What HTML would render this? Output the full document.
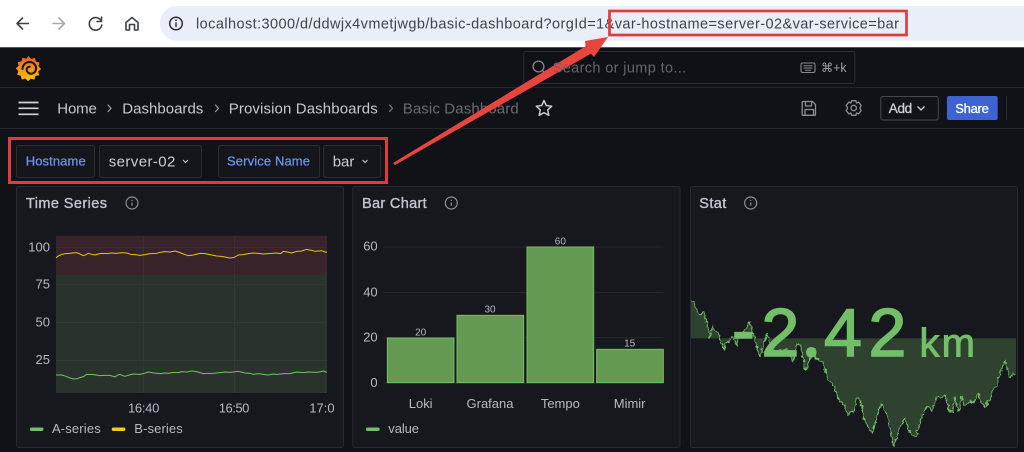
<!DOCTYPE html>
<html><head><meta charset="utf-8"><title>Basic Dashboard</title>
<style>
html,body{margin:0;padding:0;width:1024px;height:452px;overflow:hidden;background:#111217}
svg{display:block;filter:blur(.3px)}
text{font-family:"Liberation Sans",sans-serif}
</style></head><body>
<svg width="1024" height="452" viewBox="0 0 1024 452" xmlns="http://www.w3.org/2000/svg">
<defs>
<linearGradient id="lg" x1="0" y1="1" x2="0" y2="0"><stop offset="0" stop-color="#fbc70a"/><stop offset="1" stop-color="#ec5a2a"/></linearGradient>
<clipPath id="c1"><rect x="17" y="187" width="317.500" height="260"/></clipPath>
<filter id="rough" color-interpolation-filters="sRGB" filterUnits="userSpaceOnUse" x="0" y="300" width="1100" height="520"><feTurbulence type="fractalNoise" baseFrequency=".09" numOctaves="2" seed="4"/><feDisplacementMap in="SourceGraphic" scale="14" xChannelSelector="R" yChannelSelector="G"/></filter>
</defs>
<!-- browser -->
<rect width="1024" height="47.500" fill="#fff"/>
<path d="M1024 6H176a17.400 17.400 0 0 0 0 34.700H1024z" fill="#e9eef8"/>
<g fill="none" stroke-linecap="round" stroke-linejoin="round">
<path d="M28.500 23.500H17M22.500 18l-5.500 5.500 5.500 5.500" stroke="#3f4246" stroke-width="1.600"/>
<path d="M53 23.500H64.500M59 18l5.500 5.500-5.500 5.500" stroke="#a9abae" stroke-width="1.600"/>
<path d="M100.700 20.200A6.300 6.300 0 1 0 101.800 25" stroke="#3f4246" stroke-width="1.600"/>
<path d="M101.500 17v4.500H97" stroke="#3f4246" stroke-width="1.600"/>
<path d="M126 22.500l6-5 6 5v7.500h-3.500v-5.500h-5v5.500H126z" stroke="#3f4246" stroke-width="1.600"/>
<circle cx="176" cy="23.500" r="6.300" stroke="#2c2e31" stroke-width="1.500"/>
<path d="M176 23v3.500" stroke="#2c2e31" stroke-width="1.500"/>
</g>
<circle cx="176" cy="20.300" r=".9" fill="#2c2e31"/>
<text x="196" y="28.500" font-size="14.500" fill="#404347" textLength="703" lengthAdjust="spacing">localhost:3000/d/ddwjx4vmetjwgb/basic-dashboard?orgId=1&amp;var-hostname=server-02&amp;var-service=bar</text>
<rect y="47" width="1024" height="1" fill="#55565a"/>
<!-- header -->
<rect y="48" width="1024" height="404" fill="#111217"/>
<rect y="87" width="1024" height="1" fill="#25262b"/>
<rect y="128" width="1024" height="1" fill="#25262b"/>
<!-- grafana logo -->
<path d="M28.500 56l2.800 3 3.700-1.200.8 3.700 3.700 1-1 3.700 2.600 2.800-2.900 2.500 1 3.700-3.800.8-1 3.600-3.600-1-2.700 2.500-2.700-2.600-3.700 1-.8-3.700-3.700-1.100 1.100-3.600-2.500-2.700 2.800-2.700-.8-3.600 3.700-.8 1-3.700 3.700 1.100z" fill="url(#lg)"/>
<path d="M22.500 69a7 7 0 0 1 7-7c3.600 0 6.600 2.800 6.600 6.400 0 3-2.300 5.300-5.100 5.300-2.500 0-4.300-1.800-4.300-4 0-1.800 1.300-3 3-3" fill="none" stroke="#15161a" stroke-width="2" stroke-linecap="round"/>
<!-- search -->
<rect x="523.800" y="51.500" width="331" height="32" rx="2" fill="#101116" stroke="#2b2d33"/>
<circle cx="538.500" cy="66.500" r="5.400" fill="none" stroke="#85868e" stroke-width="1.300"/>
<path d="M542.500 70.500l3 3" stroke="#85868e" stroke-width="1.300"/>
<rect x="801" y="63" width="14" height="9.500" rx="1.500" fill="none" stroke="#85868e" stroke-width="1.100"/>
<path d="M803.500 65.800h9M803.500 68h9M805 70.200h6" stroke="#85868e" stroke-width="1"/>
<text x="821" y="72" font-size="12.500" fill="#a2a3ab" textLength="25.500" lengthAdjust="spacingAndGlyphs" style='font-family:"Liberation Sans","DejaVu Sans",sans-serif'>⌘+k</text>
<!-- nav -->
<path d="M18.500 102.500h20M18.500 108.300h20M18.500 114.300h20" stroke="#d0d1d9" stroke-width="1.700"/>
<g font-size="15" fill="#c5c6d0">
<text x="57.300" y="113.300" textLength="39.500" lengthAdjust="spacing">Home</text>
<text x="122.300" y="113.300" textLength="81" lengthAdjust="spacing">Dashboards</text>
<text x="228.700" y="113.300" textLength="149" lengthAdjust="spacing">Provision Dashboards</text>
<text x="402.700" y="113.300" textLength="116" lengthAdjust="spacing" fill="#686a72">Basic Dashboard</text>
</g>
<g fill="none" stroke-width="1.200" stroke-linecap="round" stroke-linejoin="round">
<path d="M108 105l3 3.300-3 3.300M215.500 105l3 3.300-3 3.300" stroke="#9a9ba4"/>
<path d="M389.500 105l3 3.300-3 3.300" stroke="#72747b"/>
<path d="M544 100.500l2.300 5 5.400.7-4 3.700 1.100 5.400-4.800-2.700-4.800 2.700 1.100-5.400-4-3.700 5.400-.7z" stroke="#c8c9d3" stroke-width="1.500"/>
<path d="M803 101.500h9.500l3 3v10a.8.800 0 0 1-.8.800h-11.700a.8.800 0 0 1-.8-.8v-12.200a.8.800 0 0 1 .8-.8zM805.500 101.500v4.500h6v-4.500M805 115v-5.500h8.500v5.500" stroke="#8d8e97" stroke-width="1.300"/>
<circle cx="853.700" cy="108" r="2.700" stroke="#8d8e97" stroke-width="1.300"/>
<path d="M851.500 100.700h4.400l.6 2.300 2.100-.9 2.600 3.300-1.400 2.600 1.400 2.600-2.600 3.300-2.100-.9-.6 2.300h-4.400l-.6-2.300-2.100.9-2.600-3.300 1.400-2.600-1.400-2.600 2.600-3.300 2.100.9z" stroke="#8d8e97" stroke-width="1.300"/>
</g>
<rect x="880.800" y="96.500" width="57.500" height="23.500" rx="2" fill="#121318" stroke="#45474d"/>
<text x="888.700" y="113" font-size="13.500" fill="#d0d1d9" stroke="#d0d1d9" stroke-width=".3" textLength="23.500" lengthAdjust="spacing">Add</text>
<path d="M917.500 106.500l3.500 3.500 3.500-3.500" fill="none" stroke="#d0d1d9" stroke-width="1.300"/>
<rect x="947" y="96" width="50.700" height="24" rx="2" fill="#3d63d2"/>
<text x="955.300" y="113" font-size="13" fill="#fff" stroke="#fff" stroke-width=".3" textLength="33.500" lengthAdjust="spacing">Share</text>
<rect x="1006" y="96" width="1" height="24" fill="#2b2d32"/>
<!-- variables -->
<g fill="#15161b" stroke="#2b2d33">
<rect x="16.500" y="145.500" width="78" height="32" rx="2"/>
<rect x="99.500" y="145.500" width="102" height="32" rx="2"/>
<rect x="218.500" y="145.500" width="101" height="32" rx="2"/>
<rect x="323.700" y="145.500" width="57" height="32" rx="2"/>
</g>
<g font-size="13" fill="#6a95ee" stroke="#6a95ee" stroke-width=".25">
<text x="25.700" y="165.500" textLength="60" lengthAdjust="spacing">Hostname</text>
<text x="227" y="165.500" textLength="83" lengthAdjust="spacing">Service Name</text>
</g>
<g font-size="15" fill="#ccccd6">
<text x="108.700" y="166.500" textLength="66.700" lengthAdjust="spacing">server-02</text>
<text x="332.700" y="166.500" textLength="21.700" lengthAdjust="spacing">bar</text>
</g>
<path d="M183 160l2.500 2.500 2.500-2.500M362.500 160l2.500 2.500 2.500-2.500" fill="none" stroke="#ccccd6" stroke-width="1"/>
<!-- panels -->
<g fill="#17181d" stroke="#26282d">
<rect x="16.500" y="186.500" width="327" height="261" rx="2"/>
<rect x="352.800" y="186.500" width="327.200" height="261" rx="2"/>
<rect x="690.500" y="186.500" width="327" height="261" rx="2"/>
</g>
<g font-size="14.500" fill="#c4c5d0" stroke="#c4c5d0" stroke-width=".35">
<text x="26" y="208" textLength="81" lengthAdjust="spacing">Time Series</text>
<text x="362" y="208" textLength="64.700" lengthAdjust="spacing">Bar Chart</text>
<text x="699.300" y="208" textLength="27" lengthAdjust="spacing">Stat</text>
</g>
<g fill="none" stroke="#8e8f98" stroke-width="1.200">
<circle cx="132" cy="203" r="6"/><path d="M132 202.500v3.200"/><path d="M132 199.800v1.200"/>
<circle cx="451.300" cy="203" r="6"/><path d="M451.300 202.500v3.200"/><path d="M451.300 199.800v1.200"/>
<circle cx="750.700" cy="203" r="6"/><path d="M750.700 202.500v3.200"/><path d="M750.700 199.800v1.200"/>
</g>
<!-- time series -->
<g clip-path="url(#c1)">
<rect x="56" y="235.700" width="271" height="38.800" fill="#38232a"/>
<rect x="56" y="274.500" width="271" height="118.500" fill="#29332c"/>
<path d="M56 247.500H327M56 284.500H327M56 322.500H327M56 360.500H327M143.500 235.700V393M234.500 235.700V393M325.500 235.700V393" stroke="#fff" stroke-opacity=".04" fill="none"/>
<g transform="translate(0 185) scale(.33333)" fill="none" stroke-width="3" stroke-linejoin="round">
<path stroke="#e8c410" d="M168 218L175 213 185 208 196 206 208 205 218 204 230 203 240 207 250 212 258 209 265 205 275 208 285 210 295 207 305 205 320 206 335 204 350 205 365 203 380 204 392 208 405 209 420 211 435 209 450 206 470 205 480 202 495 200 510 201 525 198 535 201 550 207 565 212 580 210 600 205 615 206 630 209 650 213 665 214 680 217 690 219 703 217 715 210 730 209 745 206 760 204 775 205 790 207 805 206 830 204 842 206 850 199 862 201 875 204 890 199 905 198 920 193 935 196 945 199 965 197 972 200 981 202"/>
<path stroke="#73bf69" d="M168 570L185 570 198 574 210 579 220 582 232 581 240 578 250 575 260 568 280 569 300 572 315 571 330 571 345 576 352 571 360 568 368 572 375 574 388 570 400 567 418 568 430 566 445 561 462 564 480 566 495 564 505 565 520 562 535 563 545 560 560 561 575 558 590 560 610 566 625 565 640 565 660 563 675 561 690 562 715 559 735 564 750 565 760 568 775 566 790 568 805 570 820 567 830 568 850 566 870 566 890 561 910 563 925 561 950 562 958 561 970 558 981 562"/>
</g>
</g>
<g font-size="13" fill="#b8b9c4" text-anchor="end">
<text x="50" y="251.500">100</text><text x="50" y="288.500">75</text><text x="50" y="326.500">50</text><text x="50" y="364">25</text>
</g>
<g font-size="13" fill="#b8b9c4">
<text x="128" y="412.500" textLength="31.300" lengthAdjust="spacing">16:40</text>
<text x="218.700" y="412.500" textLength="30.600" lengthAdjust="spacing">16:50</text>
<text x="309.300" y="412.500" clip-path="url(#c1)">17:00</text>
<text x="52" y="433" textLength="48.700" lengthAdjust="spacing">A-series</text>
<text x="134.300" y="433" textLength="48.400" lengthAdjust="spacing">B-series</text>
<text x="388.300" y="433" textLength="30.700" lengthAdjust="spacing">value</text>
</g>
<rect x="30" y="427.500" width="13.500" height="3.500" rx="1.700" fill="#73bf69"/>
<rect x="111.700" y="427.500" width="13.700" height="3.500" rx="1.700" fill="#f2cc0c"/>
<rect x="366" y="427.500" width="13.700" height="3.500" rx="1.700" fill="#73bf69"/>
<!-- bar chart -->
<g transform="translate(345 185) scale(.33333)">
<path d="M115 186H955M115 322H955M115 458H955M115 594H955" stroke="#26282d" stroke-width="3"/>
<g fill="#659a52" stroke="#73bf69" stroke-width="3">
<rect x="127" y="459" width="200" height="134"/>
<rect x="336" y="391" width="200" height="202"/>
<rect x="546" y="186" width="200" height="407"/>
<rect x="755" y="493" width="200" height="100"/>
</g>
<g font-size="39" fill="#b8b9c4" text-anchor="end">
<text x="98" y="197">60</text><text x="98" y="334">40</text><text x="98" y="470">20</text><text x="98" y="606">0</text>
</g>
<g font-size="30" fill="#b8b9c4" text-anchor="middle">
<text x="227" y="451">20</text><text x="435" y="383">30</text><text x="646" y="178">60</text><text x="854" y="484">15</text>
</g>
<g font-size="39" fill="#b8b9c4" text-anchor="middle">
<text x="227" y="669">Loki</text><text x="435" y="669">Grafana</text><text x="646" y="669">Tempo</text><text x="854" y="669">Mimir</text>
</g>
</g>
<!-- stat -->
<g transform="translate(680 185) scale(.33333)">
<path d="M33 348L40 350 45 360 50 372 55 385 62 390 70 380 75 392 80 415 88 458 93 440 98 422 103 435 110 440 116 443 122 468 132 495 137 475 148 468 155 455 162 462 170 482 178 450 190 440 200 428 210 410 216 435 222 450 230 480 238 515 246 500 253 470 262 445 268 470 275 490 285 498 292 505 300 495 312 498 320 490 330 510 340 533 346 500 352 477 360 482 368 515 378 556 386 530 395 510 405 518 415 525 428 530 434 552 440 575 450 590 460 600 468 620 475 640 482 650 490 656 498 680 505 690 512 680 522 682 530 640 542 645 548 680 556 710 565 728 578 745 590 700 598 670 605 655 612 670 625 700 632 740 640 782 648 760 658 730 675 700 685 735 695 750 708 755 718 720 728 690 735 670 745 662 755 680 765 650 772 635 785 640 795 630 803 660 810 678 818 680 825 635 830 660 835 680 845 635 852 660 860 660 870 648 880 655 895 625 905 655 915 668 925 645 930 650 940 610 950 600 960 565 975 525 983 558 990 580 998 565 1008 570 L1008 460 L33 460Z" fill="#73bf69" fill-opacity=".26" stroke="none"/>
<path filter="url(#rough)" d="M33 348L40 350 45 360 50 372 55 385 62 390 70 380 75 392 80 415 88 458 93 440 98 422 103 435 110 440 116 443 122 468 132 495 137 475 148 468 155 455 162 462 170 482 178 450 190 440 200 428 210 410 216 435 222 450 230 480 238 515 246 500 253 470 262 445 268 470 275 490 285 498 292 505 300 495 312 498 320 490 330 510 340 533 346 500 352 477 360 482 368 515 378 556 386 530 395 510 405 518 415 525 428 530 434 552 440 575 450 590 460 600 468 620 475 640 482 650 490 656 498 680 505 690 512 680 522 682 530 640 542 645 548 680 556 710 565 728 578 745 590 700 598 670 605 655 612 670 625 700 632 740 640 782 648 760 658 730 675 700 685 735 695 750 708 755 718 720 728 690 735 670 745 662 755 680 765 650 772 635 785 640 795 630 803 660 810 678 818 680 825 635 830 660 835 680 845 635 852 660 860 660 870 648 880 655 895 625 905 655 915 668 925 645 930 650 940 610 950 600 960 565 975 525 983 558 990 580 998 565 1008 570" fill="none" stroke="#73bf69" stroke-width="3.200" stroke-linejoin="round"/>
</g>
<text x="732 761.500 802 824 868.500" y="353.500 356 356 356 356" font-size="68" fill="#73bf69" stroke="#73bf69" stroke-width="1.600">-2.42</text>
<circle cx="811.300" cy="352.300" r="5.300" fill="#73bf69"/>
<text x="919.500" y="356.300" font-size="40" fill="#73bf69" stroke="#73bf69" stroke-width=".9" textLength="55.500" lengthAdjust="spacing">km</text>
<!-- annotations -->
<rect x="9.500" y="138.500" width="377" height="44" fill="none" stroke="#e23b3b" stroke-width="3"/>
<rect x="609.500" y="11" width="297" height="24" fill="none" stroke="#e23b3b" stroke-width="2.700"/>
<path d="M393.200 162.900L585.500 46.300 585 41 608 37 594 57 590.800 53.700 394.800 165.100Z" fill="#e8453f"/>
<text x="552.700" y="72.500" font-size="14.500" fill="#64666d" textLength="133.500" lengthAdjust="spacing">Search or jump to...</text>
</svg>
</body></html>
